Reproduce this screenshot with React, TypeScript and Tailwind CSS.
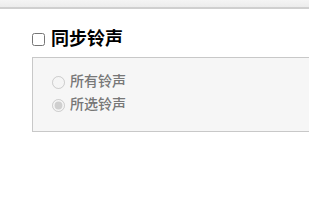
export default function App() {
  return (
    <div className="w-[309px] h-[208px] bg-white overflow-hidden" style={{ fontFamily: '"Liberation Serif", "Noto Sans CJK SC", serif' }}>
      <div className="h-[9px] bg-gradient-to-b from-[#f4f4f4] to-[#ececec] border-b-2 border-[#cfcfcf]" />
      <div className="pl-[32px] pt-[20px]">
        <label className="flex items-center gap-[6px] h-[20px]">
          <input type="checkbox" className="w-[13px] h-[13px] m-0" />
          <span className="text-[18px] font-bold text-black leading-none">同步铃声</span>
        </label>
        <div className="mt-[8px] h-[75px] w-[300px] border border-[#c8c8c8] bg-[#f6f6f6] pl-[19px] pt-[17px] flex flex-col gap-[9px]">
          <label className="flex items-center gap-[5px] h-[14px]">
            <input type="radio" name="r" disabled className="w-[13px] h-[13px] m-0" />
            <span className="text-[14px] font-medium text-[#777] leading-none">所有铃声</span>
          </label>
          <label className="flex items-center gap-[5px] h-[14px]">
            <input type="radio" name="r" disabled defaultChecked className="w-[13px] h-[13px] m-0" />
            <span className="text-[14px] font-medium text-[#777] leading-none">所选铃声</span>
          </label>
        </div>
      </div>
    </div>
  );
}
